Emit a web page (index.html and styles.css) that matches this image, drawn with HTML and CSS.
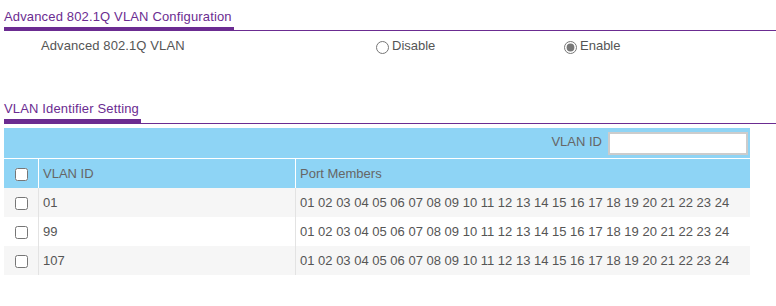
FILE: index.html
```html
<!DOCTYPE html>
<html lang="en">
  <head>
    <meta charset="UTF-8" />
    <meta name="viewport" content="width=device-width, initial-scale=1.0" />
    <title>Advanced 802.1Q VLAN Configuration</title>
    <link rel="stylesheet" href="styles.css">
  </head>
  <body>
    <div class="page">
      <div class="tab-head">
        <span class="tab">Advanced 802.1Q VLAN Configuration</span>
      </div>

      <div class="setting-row">
        <div class="setting-label">Advanced 802.1Q VLAN</div>
        <label class="opt"><input type="radio" name="adv-vlan" value="0">Disable</label>
        <label class="opt"><input type="radio" name="adv-vlan" value="1" checked>Enable</label>
      </div>

      <div class="tab-head second">
        <span class="tab">VLAN Identifier Setting</span>
      </div>

      <table class="vlan-table" id="tabela-vlan">
        <colgroup>
          <col class="col-chk">
          <col class="col-id">
          <col class="col-ports">
        </colgroup>
        <thead>
          <tr class="search">
            <td colspan="3">
              <label for="vlan-id">VLAN ID</label><input type="text" id="vlan-id">
            </td>
          </tr>
          <tr class="head">
            <th class="chk"><input type="checkbox"></th>
            <th>VLAN ID</th>
            <th>Port Members</th>
          </tr>
        </thead>
        <tbody></tbody>
      </table>
    </div>

    <script>
      const vlans = ["01", "99", "107"];
      const portas = [];
      for (let i = 1; i <= 24; i++) {
        portas.push(i < 10 ? "0" + i : "" + i);
      }

      const tabela = document
        .getElementById("tabela-vlan")
        .getElementsByTagName("tbody")[0];

      vlans.forEach((id) => {
        const row = tabela.insertRow();
        row.innerHTML = `
          <td class="chk"><input type="checkbox"></td>
          <td>${id}</td>
          <td>${portas.join(" ")}</td>
        `;
      });
    </script>
  </body>
</html>
```

FILE: styles.css
```css
body {
  margin: 0;
  font-family: "Liberation Sans", Arial, sans-serif;
  font-size: 13px;
  color: #555;
  background-color: white;
}

.page {
  padding-left: 4px;
}

.tab-head {
  border-bottom: 1px solid #6b2c91;
}

.tab {
  display: inline-block;
  padding: 8px 2px 1px 0;
  line-height: 18px;
  letter-spacing: 0.15px;
  color: #6b2c91;
  border-bottom: 3px solid #6b2c91;
}

.tab-head.second {
  margin-top: 43px;
}

.tab-head.second .tab {
  padding-top: 0;
  border-bottom-width: 4px;
}

.setting-row {
  display: grid;
  grid-template-columns: 367px 188px auto;
  height: 20px;
  margin-top: 6px;
  line-height: 18px;
}

.setting-label {
  padding-left: 37px;
  letter-spacing: 0.1px;
}

.opt input {
  margin: 0 3px 0 5px;
  vertical-align: -4px;
  accent-color: #777;
}

.vlan-table {
  width: 746px;
  margin-top: 4px;
  border-collapse: separate;
  border-spacing: 0;
  table-layout: fixed;
}

.col-chk {
  width: 34px;
}

.col-id {
  width: 257px;
}

.col-ports {
  width: 455px;
}

.vlan-table td,
.vlan-table th {
  padding: 0 4px;
  height: 29px;
  text-align: left;
  font-weight: normal;
  vertical-align: middle;
  white-space: nowrap;
}

.search td {
  height: 30px;
  padding: 0 2px 0 0;
  text-align: right;
  background-color: #8ed4f5;
  color: #666;
}

.search label {
  margin-right: 6px;
}

.search input {
  width: 140px;
  height: 23px;
  box-sizing: border-box;
  padding: 0 4px;
  border: 2px solid #cccccc;
  vertical-align: middle;
  font-family: inherit;
  font-size: 13px;
}

.head th {
  background-color: #8ed4f5;
  border-top: 1px solid white;
  color: #666;
}

.head th + th {
  border-left: 1px solid white;
}

.vlan-table .chk {
  padding: 0;
  text-align: center;
}

.chk input {
  margin: 0;
  vertical-align: middle;
}

tbody tr:nth-child(odd) {
  background-color: #f6f6f6;
}

tbody td + td {
  border-left: 1px solid #e3e3e3;
}
```
